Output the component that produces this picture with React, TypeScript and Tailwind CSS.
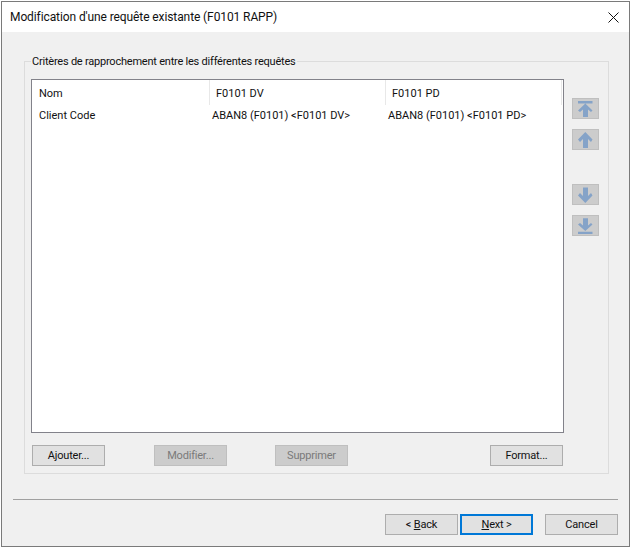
const font = "font-['Roboto',_'Liberation_Sans',_sans-serif]";

const rows = [
  { name: 'Client Code', dv: 'ABAN8 (F0101) <F0101 DV>', pd: 'ABAN8 (F0101) <F0101 PD>' },
];

function DialogButton({ label, disabled, focused, className = '' }: { label: React.ReactNode; disabled?: boolean; focused?: boolean; className?: string }) {
  const look = disabled
    ? 'border border-[#bfbfbf] bg-[#cccccc] text-[#7a7a7a]'
    : focused
      ? 'border-2 border-[#0078d7] bg-[#e1e1e1] text-[#111111]'
      : 'border border-[#adadad] bg-[#e1e1e1] text-[#111111]';
  return (
    <button className={`h-[21px] w-[73px] pt-px text-[11px] tracking-[-0.2px] ${look} ${className}`}>
      {label}
    </button>
  );
}

function ArrowButton({ kind }: { kind: 'first' | 'up' | 'down' | 'last' }) {
  const paths = {
    first: 'M6 3H20.5V5.5H6Z M13.3 5.5L20.5 12.5L19 14L16 11.5V19H11V11.5L8 14L6 12.5Z',
    up: 'M13.3 3L20.5 10.5L19 13L16 10V19H11V10L8 13L6 10.5Z',
    down: 'M13.3 19L20.5 11.5L19 9L16 12V3.5H11V12L8 9L6 11.5Z',
    last: 'M6 16.7H20.5V19H6Z M13.3 16L20.5 9.5L19 8L16 10.5V3.3H11V10.5L8 8L6 9.5Z',
  };
  return (
    <button className="flex h-[21px] w-[27px] items-center justify-center border border-[#bfbfbf] bg-[#cccccc]">
      <svg width="27" height="21" viewBox="0 0 27 21" className="shrink-0">
        <path d={paths[kind]} fill="#85a3c8" />
      </svg>
    </button>
  );
}

export default function App() {
  return (
    <div className={`h-[548px] w-[631px] overflow-hidden bg-white p-px ${font}`}>
      <div className="flex h-[546px] w-[629px] flex-col border border-[#7a7a7a] bg-[#f0f0f0] text-[#111111]">
        {/* Title bar */}
        <div className="flex h-[30px] shrink-0 items-center justify-between bg-white pl-[8px] pr-[10px]">
          <span className="text-[12px] tracking-[-0.1px]">Modification d'une requête existante (F0101 RAPP)</span>
          <svg width="11" height="11" viewBox="0 0 11 11">
            <path d="M0.5 0.5L10.5 10.5M10.5 0.5L0.5 10.5" stroke="#111111" strokeWidth="1" fill="none" />
          </svg>
        </div>

        {/* Group box */}
        <div className="relative ml-[22px] mt-[29px] h-[413px] w-[585px] border border-[#dcdcdc]">
          <span className="absolute left-[6px] top-[-8px] bg-[#f0f0f0] px-px text-[11px] leading-[15px] tracking-[-0.22px]">
            Critères de rapprochement entre les différentes requêtes
          </span>

          <div className="ml-[6px] mt-[17px] flex">
            {/* Mapping list */}
            <div className="h-[354px] w-[533px] border border-[#82828a] bg-white text-[11px]">
              <div className="flex h-[25px]">
                <div className="flex h-full w-[178px] items-center border-r border-[#e8e8e8] pl-[7px] pt-[3px]">Nom</div>
                <div className="flex h-full w-[176px] items-center border-r border-[#e8e8e8] pl-[6px] pt-[3px]">F0101 DV</div>
                <div className="flex h-full w-[176px] items-center border-r border-[#e8e8e8] pl-[6px] pt-[3px]">F0101 PD</div>
              </div>
              {rows.map((row) => (
                <div key={row.name} className="flex h-[20px] items-center pt-[2px]">
                  <div className="w-[178px] pl-[7px]">{row.name}</div>
                  <div className="w-[176px] pl-[2px]">{row.dv}</div>
                  <div className="w-[176px] pl-[2px]">{row.pd}</div>
                </div>
              ))}
            </div>

            {/* Move buttons */}
            <div className="ml-[8px] flex flex-col pt-[19px]">
              <ArrowButton kind="first" />
              <div className="mt-[10px]"><ArrowButton kind="up" /></div>
              <div className="mt-[34px]"><ArrowButton kind="down" /></div>
              <div className="mt-[10px]"><ArrowButton kind="last" /></div>
            </div>
          </div>

          <div className="ml-[7px] mt-[12px] flex w-[531px]">
            <DialogButton label="Ajouter..." />
            <DialogButton label="Modifier..." disabled className="ml-[49px]" />
            <DialogButton label="Supprimer" disabled className="ml-[48px]" />
            <DialogButton label="Format..." className="ml-auto" />
          </div>
        </div>

        {/* Separator */}
        <div className="ml-[11px] mt-[25px] h-px w-[605px] bg-[#a0a0a0]" />

        {/* Wizard buttons */}
        <div className="ml-[383px] mt-[14px] flex">
          <DialogButton label={<>&lt; <span className="underline">B</span>ack</>} />
          <DialogButton
            label={<><span className="underline">N</span>ext &gt;</>}
            focused
            className="ml-[2px]"
          />
          <DialogButton label="Cancel" className="ml-[12px]" />
        </div>
      </div>
    </div>
  );
}
